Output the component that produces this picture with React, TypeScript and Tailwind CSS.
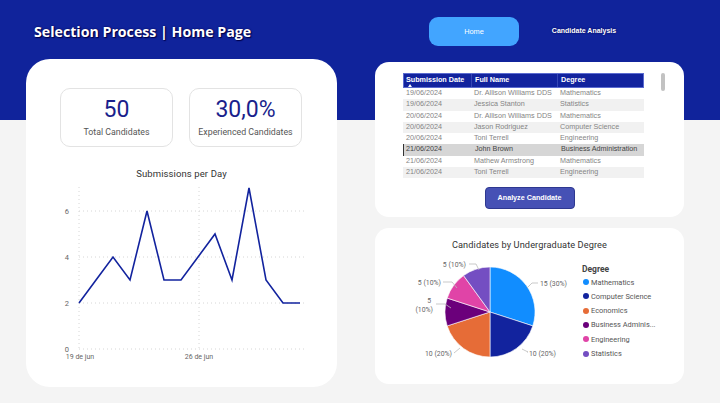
import React from 'react';

const rows = [
  ['19/06/2024', 'Dr. Allison Williams DDS', 'Mathematics'],
  ['19/06/2024', 'Jessica Stanton', 'Statistics'],
  ['20/06/2024', 'Dr. Allison Williams DDS', 'Mathematics'],
  ['20/06/2024', 'Jason Rodriguez', 'Computer Science'],
  ['20/06/2024', 'Toni Terrell', 'Engineering'],
  ['21/06/2024', 'John Brown', 'Business Administration'],
  ['21/06/2024', 'Mathew Armstrong', 'Mathematics'],
  ['21/06/2024', 'Toni Terrell', 'Engineering'],
];

const submissions = [2, 3, 4, 3, 6, 3, 3, 4, 5, 3, 7, 3, 2, 2];

const degrees = [
  { name: 'Mathematics', color: '#118dff' },
  { name: 'Computer Science', color: '#12239e' },
  { name: 'Economics', color: '#e66c37' },
  { name: 'Business Adminis...', color: '#6b007b' },
  { name: 'Engineering', color: '#e044a7' },
  { name: 'Statistics', color: '#744ec2' },
];

const DIN = { fontFamily: 'Roboto, "Noto Sans", sans-serif' };
const SEGOE = { fontFamily: '"Liberation Sans", Arial, sans-serif' };

function Kpi({ value, label }: { value: string; label: string }) {
  return (
    <div className="w-[113px] h-[59px] rounded-[10px] border border-[#e3e3e3] flex flex-col items-center justify-center">
      <div className="text-[23px] leading-[26px] text-[#1a1f8c]" style={DIN}>
        {value}
      </div>
      <div className="text-[8.8px] leading-[12px] text-[#555] mt-[3px]" style={DIN}>
        {label}
      </div>
    </div>
  );
}

function LineChart() {
  const pts = submissions.map((v, i) => `${19 + 17 * i},${167 - 23 * v}`).join(' ');
  return (
    <svg width="250" height="180" viewBox="0 0 250 180" className="block" style={DIN}>
      {[0, 2, 4, 6].map((v) => (
        <g key={v}>
          <line x1="19" x2="245" y1={167 - 23 * v} y2={167 - 23 * v} stroke="#d6d6d6" strokeWidth="1" strokeDasharray="1 3" />
          <text x="9" y={167 - 23 * v + 2.5} textAnchor="end" fontSize="7.5" fill="#666">
            {v}
          </text>
        </g>
      ))}
      <line x1="19" x2="19" y1="5" y2="167" stroke="#d6d6d6" strokeDasharray="1 3" />
      <line x1="139" x2="139" y1="5" y2="167" stroke="#d6d6d6" strokeDasharray="1 3" />
      <text x="20" y="177" textAnchor="middle" fontSize="7" fill="#666">19 de jun</text>
      <text x="139" y="177" textAnchor="middle" fontSize="7" fill="#666">26 de jun</text>
      <polyline points={pts} fill="none" stroke="#12239e" strokeWidth="1.6" strokeLinejoin="miter" />
    </svg>
  );
}

function PieChart() {
  const cx = 95;
  const cy = 57;
  const r = 45;
  const shares = [30, 20, 20, 10, 10, 10];
  let acc = 0;
  const pt = (deg: number) => {
    const a = (deg * Math.PI) / 180;
    return [cx + r * Math.sin(a), cy - r * Math.cos(a)];
  };
  const slices = shares.map((s, i) => {
    const a0 = (acc / 100) * 360;
    acc += s;
    const a1 = (acc / 100) * 360;
    const [x0, y0] = pt(a0);
    const [x1, y1] = pt(a1);
    const large = a1 - a0 > 180 ? 1 : 0;
    return (
      <path
        key={i}
        d={`M${cx},${cy} L${x0},${y0} A${r},${r} 0 ${large} 1 ${x1},${y1} Z`}
        fill={degrees[i].color}
        stroke="#fff"
        strokeWidth="0.6"
      />
    );
  });
  const lbl = { fontSize: 6.9, fill: '#666' };
  return (
    <svg width="180" height="120" viewBox="0 0 180 120" className="block" style={DIN}>
      {slices}
      <g stroke="#bbb" strokeWidth="0.8" fill="none">
        <polyline points="132,33 137,28 143,28" />
        <polyline points="127,94 133,97 132,97" />
        <polyline points="65,93 59,98 59,98" />
        <polyline points="56,53 50,49 41,49" />
        <polyline points="62,33 57,27 48,27" />
        <polyline points="84,15 81,9 74,9" />
      </g>
      <text x="145" y="30.5" {...lbl}>15 (30%)</text>
      <text x="134" y="100.5" {...lbl}>10 (20%)</text>
      <text x="57" y="100.5" textAnchor="end" {...lbl}>10 (20%)</text>
      <text x="36" y="47.5" textAnchor="end" {...lbl}>5</text>
      <text x="38" y="56.5" textAnchor="end" {...lbl}>(10%)</text>
      <text x="46" y="29.5" textAnchor="end" {...lbl}>5 (10%)</text>
      <text x="71" y="11.5" textAnchor="end" {...lbl}>5 (10%)</text>
    </svg>
  );
}

export default function App() {
  return (
    <div
      className="w-[720px] h-[403px] overflow-hidden bg-[linear-gradient(to_bottom,#10239b_0px,#10239b_120px,#f4f4f4_120px)]"
      style={{ fontFamily: '"Open Sans", "Liberation Sans", sans-serif' }}
    >
      <header className="h-[59px] pt-[4px] flex items-center pl-[34px]">
        <div className="w-[395px] text-white font-bold text-[14.2px] leading-[20px] [text-shadow:0_0_2px_#00004a,1px_1px_1px_#00004a]">
          Selection Process | Home Page
        </div>
        <button className="w-[90px] h-[29px] rounded-[9px] bg-[#42a5ff] text-white text-[7.4px]" style={SEGOE}>
          Home
        </button>
        <button
          className="w-[90px] h-[29px] ml-[20px] text-white text-[7px] font-bold [text-shadow:0_0_2px_#00004a]"
          style={SEGOE}
        >
          Candidate Analysis
        </button>
      </header>

      <main className="flex pl-[26px] gap-[38px]">
        <section className="w-[311px] h-[328px] bg-white rounded-[24px] px-[34px] pt-[29px]">
          <div className="flex gap-[16px]">
            <Kpi value="50" label="Total Candidates" />
            <Kpi value="30,0%" label="Experienced Candidates" />
          </div>
          <div className="mt-[20px] text-center text-[9.5px] leading-[14px] text-[#333] tracking-[0.1px]" style={DIN}>
            Submissions per Day
          </div>
          <div className="mt-[1px]">
            <LineChart />
          </div>
        </section>

        <div className="w-[309px] pt-[3px] flex flex-col gap-[11px]">
          <section className="h-[155px] bg-white rounded-[14px] pt-[11px] pl-[28px] relative">
            <div className="absolute left-[286px] top-[11px] w-[4px] h-[18px] rounded-full bg-[#c2c2c2]" />
            <div className="w-[241px] text-[7.2px] whitespace-nowrap" style={SEGOE}>
              <div className="flex h-[15px] bg-[#12239e] border border-[#5b6bd0] text-white font-bold items-center relative">
                <div className="w-[68px] pl-[2px] border-r border-[#3546b5] h-full flex items-center">Submission Date</div>
                <div className="w-[86px] pl-[3px] border-r border-[#3546b5] h-full flex items-center">Full Name</div>
                <div className="flex-1 pl-[3px] h-full flex items-center">Degree</div>
                <div className="absolute left-[4px] bottom-[0px] w-0 h-0 border-l-[2px] border-r-[2px] border-b-[3px] border-l-transparent border-r-transparent border-b-white" />
              </div>
              {rows.map((r, i) => {
                const sel = i === 5;
                const bg = sel ? 'bg-[#d6d6d6]' : i % 2 === 1 || i === 7 ? 'bg-[#f1f1f1]' : 'bg-white';
                return (
                  <div
                    key={i}
                    className={`flex h-[11.25px] items-center ${bg} ${sel ? 'text-[#444] border-l border-[#333]' : 'text-[#858585]'}`}
                  >
                    <div className={`w-[68px] ${sel ? 'pl-[2px]' : 'pl-[3px]'}`}>{r[0]}</div>
                    <div className="w-[86px] pl-[3px] overflow-hidden">{r[1]}</div>
                    <div className="flex-1 pl-[3px]">{r[2]}</div>
                  </div>
                );
              })}
            </div>
            <div className="flex justify-center pr-[28px] mt-[9px]">
              <button
                className="w-[90px] h-[22px] rounded-[4px] bg-[#4651b5] border border-[#2e3890] text-white text-[7.2px] font-bold"
                style={SEGOE}
              >
                Analyze Candidate
              </button>
            </div>
          </section>

          <section className="h-[156px] bg-white rounded-[14px] pt-[10px]">
            <div className="text-center text-[9.2px] leading-[14px] text-[#333] tracking-[0.1px]" style={DIN}>
              Candidates by Undergraduate Degree
            </div>
            <div className="flex pl-[20px] mt-[3px]">
              <PieChart />
              <div className="ml-[7px] pt-[8px]">
                <div className="text-[8.5px] font-bold text-[#444] leading-[12px]" style={DIN}>
                  Degree
                </div>
                <div className="flex flex-col">
                  {degrees.map((d) => (
                    <div key={d.name} className="flex items-center h-[14.3px] gap-[2px]">
                      <span className="w-[6px] h-[6px] rounded-full ml-[1px]" style={{ backgroundColor: d.color }} />
                      <span className="text-[7.4px] text-[#555] whitespace-nowrap" style={DIN}>
                        {d.name}
                      </span>
                    </div>
                  ))}
                </div>
              </div>
            </div>
          </section>
        </div>
      </main>
    </div>
  );
}
